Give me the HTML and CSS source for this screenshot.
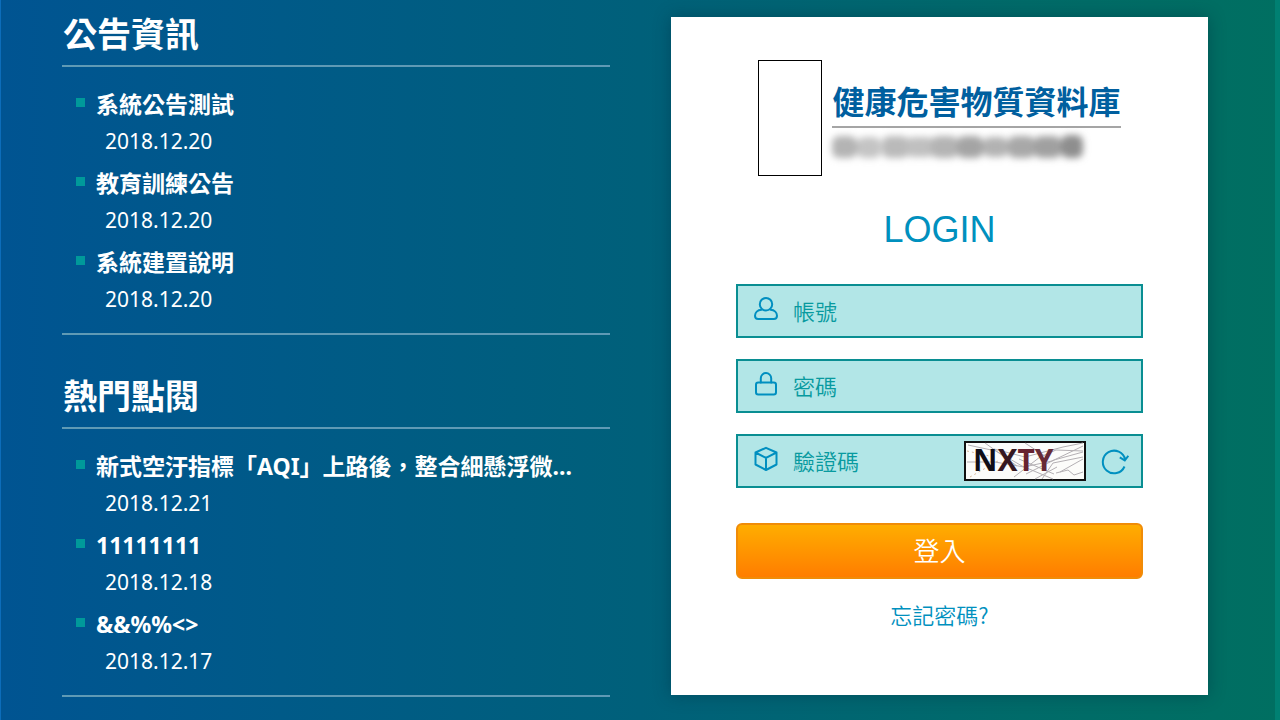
FILE: index.html
```html
<!DOCTYPE html>
<html lang="zh-Hant">
<head>
<meta charset="utf-8">
<meta name="viewport" content="width=device-width, initial-scale=1">
<title>健康危害物質資料庫</title>
<link rel="stylesheet" href="styles.css">
</head>
<body>
<div class="page">
  <main class="news">
    <section class="news-section">
      <h2 class="news-heading">公告資訊</h2>
      <ul class="news-list">
        <li class="news-item"><span class="news-title">系統公告測試</span><time class="news-date" datetime="2018-12-20">2018.12.20</time></li>
        <li class="news-item"><span class="news-title">教育訓練公告</span><time class="news-date" datetime="2018-12-20">2018.12.20</time></li>
        <li class="news-item"><span class="news-title">系統建置說明</span><time class="news-date" datetime="2018-12-20">2018.12.20</time></li>
      </ul>
    </section>
    <section class="news-section">
      <h2 class="news-heading">熱門點閱</h2>
      <ul class="news-list">
        <li class="news-item"><span class="news-title">新式空汙指標「AQI」上路後，整合細懸浮微...</span><time class="news-date" datetime="2018-12-21">2018.12.21</time></li>
        <li class="news-item"><span class="news-title">11111111</span><time class="news-date" datetime="2018-12-18">2018.12.18</time></li>
        <li class="news-item"><span class="news-title">&amp;&amp;%%&lt;&gt;</span><time class="news-date" datetime="2018-12-17">2018.12.17</time></li>
      </ul>
    </section>
  </main>

  <form class="card">
    <div class="brand">
      <div class="brand-mark"></div>
      <div class="brand-text">
        <h1 class="brand-name">健康危害物質資料庫</h1>
        <svg class="brand-caption" viewBox="0 0 286 40" aria-hidden="true">
          <defs><filter id="soft" x="-10%" y="-60%" width="120%" height="220%"><feGaussianBlur stdDeviation="3.500"/></filter></defs>
          <g filter="url(#soft)">
            <rect x="0" y="8" width="25" height="22" rx="7" fill="#b4b4b4"/>
            <rect x="25" y="9" width="24" height="21" rx="7" fill="#c4c4c4"/>
            <rect x="50" y="8" width="27" height="22" rx="7" fill="#bababa"/>
            <rect x="74" y="9" width="28" height="20" rx="7" fill="#c0c0c0"/>
            <rect x="99" y="8" width="27" height="22" rx="7" fill="#b4b4b4"/>
            <rect x="125" y="8" width="26" height="22" rx="7" fill="#a4a4a4"/>
            <rect x="151" y="9" width="25" height="20" rx="7" fill="#b2b2b2"/>
            <rect x="176" y="8" width="27" height="22" rx="7" fill="#a8a8a8"/>
            <rect x="202" y="8" width="27" height="22" rx="7" fill="#a0a0a0"/>
            <rect x="229" y="7" width="22" height="23" rx="7" fill="#8e8e8e"/>
          </g>
        </svg>
      </div>
    </div>

    <h2 class="login-title">LOGIN</h2>

    <div class="fields">
      <label class="field">
        <svg class="icon" viewBox="0 0 26 26" aria-hidden="true"><circle cx="13" cy="8.200" r="6.200"/><path d="M8.500 13.800C4.500 14 2 16.500 2 19.800c0 2 1.200 3.200 3.200 3.200h15.600c2 0 3.200-1.200 3.200-3.200 0-3.300-2.500-5.800-6.500-6"/></svg>
        <input class="field-input" type="text" placeholder="帳號" aria-label="帳號">
      </label>
      <label class="field">
        <svg class="icon" viewBox="0 0 26 26" aria-hidden="true"><rect x="3" y="11.500" width="20" height="12" rx="2.200"/><path d="M7.800 11.500V7.300a5.200 5.200 0 0 1 10.400 0v4.200"/></svg>
        <input class="field-input" type="password" placeholder="密碼" aria-label="密碼">
      </label>
      <div class="field">
        <svg class="icon" viewBox="0 0 26 26" aria-hidden="true"><path d="M13 1.800 23.500 6.500V18.500L13 24 2.500 18.500V6.500zM2.500 6.500 13 11.800 23.500 6.500M13 11.800V24"/></svg>
        <input class="field-input" type="text" placeholder="驗證碼" aria-label="驗證碼">
        <svg class="captcha" viewBox="0 0 122 40" role="img" aria-label="NXTY">
          <rect x="1" y="1" width="120" height="38" fill="#fcfcfa" stroke="#111" stroke-width="2"/>
          <g fill="none" stroke="#b4b0b4" stroke-width="1">
            <path d="M4 4 32 10 58 25 89 38M21 2l32 23M61 2 84 17M3 21h28l29 5 28-6 31-15M30 8l31 8 38-10 20-4M50 36l26-20 16-7 27 1M55 18l35 15M62 33l28-14 29-8M78 38l11-16 30-6M96 31l23-13M71 38l22-12M92 32l12-3 6 5 9-3"/>
          </g>
          <path d="M3 10 30 16M6 36 34 20" stroke="#d8b99a" fill="none" stroke-dasharray="2 3"/>
          <text class="captcha-text" x="9" y="30"><tspan fill="#100e16">N</tspan><tspan fill="#351820">X</tspan><tspan fill="#672330">T</tspan><tspan fill="#672b35">Y</tspan></text>
        </svg>
        <button class="refresh" type="button" aria-label="重新整理驗證碼">
          <svg viewBox="0 0 28 28" aria-hidden="true"><path d="M23.500 19.500A11.300 11.300 0 1 1 24.200 12.700M18.800 10.300 23.800 13.500 27.300 8.800"/></svg>
        </button>
      </div>
    </div>

    <button class="submit" type="submit">登入</button>
    <a class="forgot" href="#">忘記密碼?</a>
  </form>
</div>
</body>
</html>
```
FILE: styles.css
```css
* { box-sizing: border-box; }

body {
  margin: 0;
  min-height: 100vh;
  font-family: "Noto Sans", "Noto Sans CJK TC", sans-serif;
  color: #fff;
  background:
    linear-gradient(#0c6dba, #0c6dba) left / 1px 100% no-repeat,
    linear-gradient(#008072, #008072) right / 5px 100% no-repeat,
    linear-gradient(90deg, #005492 0%, #005a88 22%, #00607a 50%, #006b69 80%, #006f61 100%);
}

.page {
  display: grid;
  grid-template-columns: minmax(0, 548fr) minmax(0, 537fr);
  column-gap: 61px;
  align-items: start;
  padding: 4px 72px 0 62px;
}

.news {
  display: grid;
  grid-template-columns: minmax(0, 1fr);
  gap: 31px;
}

.news-section { border-bottom: 2px solid #5f9ab5; }

.news-heading {
  margin: 0;
  padding: 0 0 3px 1px;
  border-bottom: 2px solid #5f9ab5;
  font-family: "Noto Sans CJK TC", sans-serif;
  font-size: 34px;
  line-height: 58px;
  font-weight: 700;
}

.news-list {
  display: grid;
  gap: 7px;
  margin: 0;
  padding: 20px 0 16px 14px;
  list-style: none;
}

.news-item {
  display: grid;
  grid-template-columns: 9px minmax(0, 1fr);
  column-gap: 11px;
  line-height: 36px;
}

.news-item::before {
  content: "";
  height: 9px;
  margin-top: 11px;
  background: #00999a;
}

.news-title {
  padding-bottom: 2px;
  font-size: 23px;
  line-height: 34px;
  font-weight: 700;
  white-space: nowrap;
}

.news-date {
  grid-column: 2;
  padding-left: 9px;
  font-size: 21px;
}

.card {
  display: flex;
  flex-direction: column;
  margin-top: 13px;
  margin-bottom: 24px;
  padding: 43px 65px 63px;
  background: #fff;
  box-shadow: 0 0 16px rgba(0, 40, 60, 0.4);
}

.brand {
  display: flex;
  justify-content: center;
  gap: 10px;
}

.brand-mark {
  width: 64px;
  height: 116px;
  border: 1px solid #000;
}

.brand-text { padding-top: 16px; }

.brand-name {
  margin: 0;
  padding-bottom: 2px;
  border-bottom: 2px solid #a5a5a5;
  font-family: "Noto Sans CJK TC", sans-serif;
  font-size: 32px;
  line-height: 48px;
  font-weight: 700;
  color: #005f9f;
}

.brand-caption {
  display: block;
  width: 286px;
  height: 40px;
  overflow: visible;
}

.login-title {
  margin: 32px 0;
  font-family: "Liberation Sans", sans-serif;
  font-size: 36px;
  line-height: 44px;
  font-weight: 400;
  text-align: center;
  color: #0090be;
}

.fields {
  display: grid;
  grid-template-columns: minmax(0, 1fr);
  gap: 21px;
}

.field {
  display: flex;
  align-items: center;
  height: 54px;
  padding: 0 12px 0 15px;
  border: 2px solid #098e92;
  background: #b2e6e7;
}

.icon {
  flex: none;
  width: 26px;
  height: 26px;
  margin-right: 14px;
  margin-bottom: 4px;
  fill: none;
  stroke: #008fc0;
  stroke-width: 2;
  stroke-linecap: round;
  stroke-linejoin: round;
}

.field-input {
  flex: 1;
  min-width: 0;
  height: 50px;
  padding: 0 0 3px;
  border: 0;
  outline: 0;
  background: transparent;
  font-family: "Noto Sans CJK TC", sans-serif;
  font-size: 22px;
  font-weight: 350;
  color: #089a9f;
}

.field-input::placeholder {
  color: #089a9f;
  opacity: 1;
}

.captcha {
  flex: none;
  width: 122px;
  height: 40px;
  overflow: visible;
}

.captcha-text {
  font-family: "Noto Sans", sans-serif;
  font-size: 30px;
  font-weight: 700;
}

.refresh {
  flex: none;
  width: 28px;
  height: 28px;
  margin-left: 15px;
  padding: 0;
  border: 0;
  background: none;
}

.refresh svg {
  display: block;
  fill: none;
  stroke: #0090c0;
  stroke-width: 2;
}

.submit {
  height: 56px;
  margin-top: 35px;
  padding: 0 0 4px;
  border: 2px solid #f08c08;
  border-radius: 6px;
  background: linear-gradient(#ffad00, #ff7d00);
  font-family: "Noto Sans CJK TC", sans-serif;
  font-size: 26px;
  font-weight: 350;
  color: #fff;
}

.forgot {
  align-self: center;
  margin-top: 19px;
  padding-bottom: 2px;
  font-family: "Noto Sans CJK TC", sans-serif;
  font-size: 22px;
  line-height: 32px;
  font-weight: 350;
  color: #0090be;
  text-decoration: none;
}
```
